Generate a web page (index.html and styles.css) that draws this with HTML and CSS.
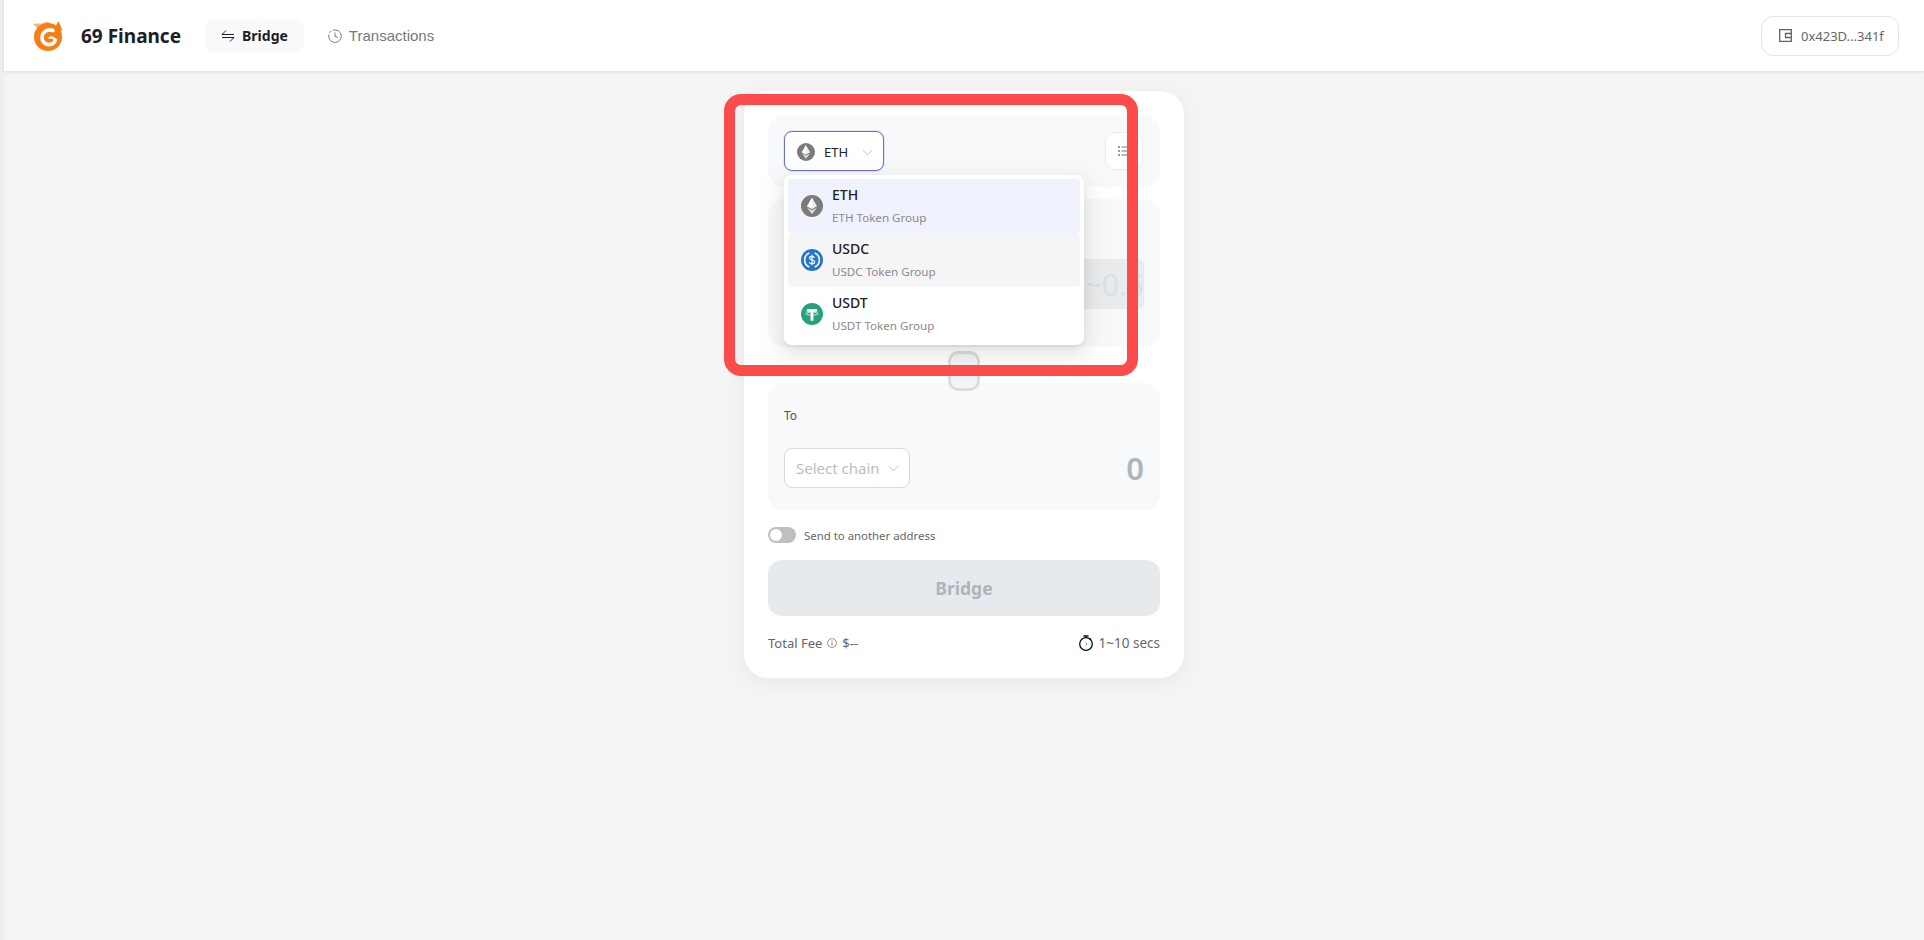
FILE: index.html
```html
<!DOCTYPE html>
<html lang="en">
<head>
<meta charset="utf-8">
<title>69 Finance</title>
<link rel="stylesheet" href="styles.css">
</head>
<body>
<header class="topbar">
  <div class="brand">
    <svg class="logo" viewBox="0 0 32 32" aria-hidden="true">
      <path d="M1 4.500c3-1.800 5.500-.6 8-.8 2.500-.2 5-2.500 9-1.700-2 .8-3 2-3 3.500L7 11C6 8 4 6 1 4.500z" fill="#f9b27a"/>
      <path d="M22 9 26.500 1c.6 3 3.500 6 3.500 10z" fill="#f47f16"/>
      <circle cx="16" cy="17" r="14" fill="#f47f16"/>
      <path d="M21 10.500c-5.500-2-11 1.500-11 7 0 5 4.500 8 9 6.800 2.200-.6 3.800-2.300 4.300-4.300" fill="none" stroke="#fff" stroke-width="3.600" stroke-linecap="round"/>
      <path d="M23.300 20c-1.500-2.500-4-3-6-2" fill="none" stroke="#fff" stroke-width="2" stroke-linecap="round"/>
    </svg>
    <span class="brand-name">69 Finance</span>
  </div>
  <nav class="nav">
    <a class="nav-item nav-active">
      <svg class="nav-icon" viewBox="0 0 14 14" aria-hidden="true"><path d="M1 5.500h12M1 5.500 5 1.500M13 8.500H1M13 8.500l-4 4" fill="none" stroke="currentColor" stroke-width="1"/></svg>
      Bridge
    </a>
    <a class="nav-item">
      <svg class="nav-icon" viewBox="0 0 14 14" aria-hidden="true"><path d="M5 1.200A6.300 6.300 0 1 1 .9 5.500M7 3.500V7.300l2.800 1.400" fill="none" stroke="currentColor" stroke-width="1"/><path d="M1.500 3.800 3.300 2" stroke="currentColor" stroke-width="1"/></svg>
      Transactions
    </a>
  </nav>
  <button class="wallet">
    <svg class="wallet-icon" viewBox="0 0 13 13" aria-hidden="true"><path d="M.7.700h11.600v11.600H.7zM12 4.500H6.500v4H12" fill="none" stroke="#5f6368" stroke-width="1.300"/></svg>
    0x423D...341f
  </button>
</header>

<main class="page">
  <section class="card">
    <div class="panel panel-token">
      <div class="select-wrap">
        <div class="select select-open">
          <svg class="token-sm" viewBox="0 0 22 22" aria-hidden="true"><use href="#eth"/></svg>
          <span class="select-label">ETH</span>
          <svg class="chev chev-token" viewBox="0 0 12 7" aria-hidden="true"><path d="M1 1l5 5 5-5" fill="none" stroke="currentColor"/></svg>
        </div>
        <div class="menu">
          <div class="menu-item menu-selected">
            <svg class="token" viewBox="0 0 22 22" aria-hidden="true">
              <g id="eth">
                <circle cx="11" cy="11" r="11" fill="#7c7b7a"/>
                <path d="M11 2.800 6 11.200 11 14l5-2.800z" fill="#eeeeee"/>
                <path d="M11 2.800v11.200L6 11.200z" fill="#fff"/>
                <path d="M6 12.400 11 19.200l5-6.800-5 2.800z" fill="#dddddd"/>
              </g>
            </svg>
            <div class="menu-text"><span class="menu-title">ETH</span><span class="menu-sub">ETH Token Group</span></div>
          </div>
          <div class="menu-item menu-hover">
            <svg class="token" viewBox="0 0 22 22" aria-hidden="true">
              <circle cx="11" cy="11" r="11" fill="#2775ca"/>
              <path d="M8.300 4a7.600 7.600 0 0 0 0 14M13.700 4a7.600 7.600 0 0 1 0 14" fill="none" stroke="#fff" stroke-width="1.500"/>
              <path d="M13.500 8.700c-.4-1-1.300-1.400-2.500-1.400-1.400 0-2.400.7-2.400 1.800 0 2.500 5 1.200 5 3.800 0 1.100-1 1.800-2.600 1.800-1.300 0-2.300-.6-2.600-1.600M11 5.800v10.400" fill="none" stroke="#fff" stroke-width="1.200"/>
            </svg>
            <div class="menu-text"><span class="menu-title">USDC</span><span class="menu-sub">USDC Token Group</span></div>
          </div>
          <div class="menu-item">
            <svg class="token" viewBox="0 0 22 22" aria-hidden="true">
              <circle cx="11" cy="11" r="11" fill="#26a17b"/>
              <path d="M5.800 6.300h10.400v2.400h-3.800v9h-2.800v-9H5.800z" fill="#fff"/>
              <ellipse cx="11" cy="10.600" rx="6.200" ry="1.500" fill="none" stroke="#fff" stroke-width=".8"/>
            </svg>
            <div class="menu-text"><span class="menu-title">USDT</span><span class="menu-sub">USDT Token Group</span></div>
          </div>
        </div>
      </div>
      <button class="list-btn" aria-label="List">
        <svg viewBox="0 0 12 12" class="list-icon" aria-hidden="true"><path d="M3.500 2H12M3.500 6H12M3.500 10H12" stroke="#777" stroke-width="1"/><circle cx="1" cy="2" r="1" fill="#777"/><circle cx="1" cy="6" r="1" fill="#777"/><circle cx="1" cy="10" r="1" fill="#777"/></svg>
      </button>
    </div>

    <div class="panel panel-from">
      <div class="amount-input">~0.5</div>
    </div>

    <div class="swap" aria-hidden="true"></div>

    <div class="panel panel-to">
      <span class="panel-label">To</span>
      <div class="panel-row">
        <div class="select select-chain">
          <span>Select chain</span>
          <svg class="chev" viewBox="0 0 12 7" aria-hidden="true"><path d="M1 1l5 5 5-5" fill="none" stroke="currentColor"/></svg>
        </div>
        <div class="amount-zero">0</div>
      </div>
    </div>

    <div class="send-row">
      <span class="toggle"><span class="knob"></span></span>
      <span>Send to another address</span>
    </div>

    <button class="bridge-btn">Bridge</button>

    <div class="fee-row">
      <div class="fee-left">
        <span>Total Fee</span>
        <svg class="info" viewBox="0 0 10 10" aria-hidden="true"><circle cx="5" cy="5" r="4.400" fill="none" stroke="#777" stroke-width=".8"/><path d="M5 4.200v3.200M5 2.400v1" stroke="#777" stroke-width=".9"/></svg>
        <span>$--</span>
      </div>
      <div class="fee-right">
        <svg class="watch" viewBox="0 0 16 16" aria-hidden="true"><circle cx="8" cy="9" r="6.300" fill="#fff" stroke="#111" stroke-width="1.300"/><path d="M5.500 1h5M8 1v2M13 3.500l-1.400 1.400" stroke="#111" stroke-width="1.300" fill="none"/><path d="M7.500 7.500 9 9l-1.500 1.500" stroke="#d33" stroke-width=".7" fill="none"/></svg>
        <span>1~10 secs</span>
      </div>
    </div>

    <div class="annotation" aria-hidden="true"></div>
  </section>
</main>
</body>
</html>
```
FILE: styles.css
```css
* { box-sizing: border-box; }

html, body { height: 100%; }

body {
  margin: 0;
  padding-left: 4px;
  min-height: 940px;
  overflow: hidden;
  background: #f4f4f4;
  font-family: "Noto Sans", "Open Sans", Arial, sans-serif;
  color: #222;
  box-shadow: inset 4px 0 0 #eeeeef;
}

button { font-family: inherit; }

.topbar {
  display: flex;
  align-items: center;
  height: 71px;
  padding: 0 25px 0 28px;
  background: #fff;
  box-shadow: 0 1px 3px rgba(0, 0, 0, .1);
}

.brand {
  display: flex;
  align-items: center;
  gap: 17px;
}

.logo { width: 32px; height: 32px; }

.brand-name {
  font-size: 19px;
  font-weight: 700;
  color: #1c2026;
  line-height: 24px;
}

.nav {
  display: flex;
  align-items: center;
  gap: 8px;
  margin-left: 24px;
}

.nav-item {
  display: flex;
  align-items: center;
  gap: 7px;
  height: 33px;
  padding: 0 16px;
  border-radius: 8px;
  font-family: "Liberation Sans", Arial, sans-serif;
  font-size: 15px;
  color: #777;
}

.nav-active {
  background: #f7f9fb;
  color: #1c2026;
  font-family: "Noto Sans", sans-serif;
  font-size: 14px;
  font-weight: 700;
}

.nav-icon { width: 14px; height: 14px; }

.wallet {
  display: flex;
  align-items: center;
  gap: 9px;
  height: 40px;
  width: 138px;
  margin-left: auto;
  padding: 0 0 0 17px;
  border: 1px solid #e3e4e6;
  border-radius: 12px;
  background: #fff;
  color: #666;
  font-family: "Noto Sans", sans-serif;
  font-size: 13px;
}

.wallet-icon { width: 13px; height: 13px; flex: none; }

.page {
  display: flex;
  justify-content: center;
  padding: 20px 0 0 0;
}

.card {
  position: relative;
  width: 440px;
  height: 587px;
  padding: 24px;
  border-radius: 24px;
  background: #fff;
  box-shadow: 0 4px 20px rgba(0, 0, 0, .05);
}

.panel {
  border-radius: 16px;
  background: #f7f9fb;
}

.panel-token {
  display: flex;
  align-items: center;
  justify-content: space-between;
  height: 72px;
  padding: 0 17px 0 16px;
}

.panel-from {
  display: flex;
  justify-content: flex-end;
  height: 148px;
  margin-top: 12px;
  padding: 60px 16px 0;
}

.panel-to {
  height: 127px;
  margin-top: 36px;
  padding: 25px 16px 0;
}

.panel-label {
  display: block;
  font-size: 12px;
  line-height: 16px;
  color: #555;
}

.panel-row {
  display: flex;
  align-items: center;
  justify-content: space-between;
  margin-top: 24px;
}

.select-wrap { position: relative; }

.select {
  display: flex;
  align-items: center;
  background: #fff;
  border: 1px solid #d9d9d9;
  border-radius: 8px;
}

.select-open {
  width: 100px;
  height: 40px;
  padding: 2px 0 0 12px;
  border-color: #6a70c4;
  box-shadow: 0 0 0 1px rgba(106, 112, 196, .15);
  font-size: 13px;
  color: #222;
}

.token-sm { width: 18px; height: 18px; flex: none; }

.select-label { margin-left: 9px; }

.chev { width: 11px; height: 7px; color: #bbb; flex: none; }

.chev-token { margin-left: 14px; }

.select-chain {
  justify-content: space-between;
  width: 126px;
  height: 40px;
  padding: 0 10px 0 11px;
  font-size: 15px;
  color: #bdbdbd;
}

.menu {
  position: absolute;
  z-index: 2;
  top: 44px;
  left: 0;
  width: 300px;
  padding: 4px;
  border-radius: 8px;
  background: #fff;
  box-shadow: 0 6px 16px rgba(0, 0, 0, .08), 0 3px 6px -4px rgba(0, 0, 0, .12), 0 9px 28px 8px rgba(0, 0, 0, .05);
}

.menu-item {
  display: flex;
  align-items: center;
  gap: 9px;
  height: 54px;
  padding: 0 13px;
  border-radius: 4px;
}

.menu-selected { background: #eff1fd; }

.menu-hover { background: #f5f5f5; }

.token { width: 22px; height: 22px; flex: none; }

.menu-text {
  display: flex;
  flex-direction: column;
  gap: 7px;
  padding-bottom: 1px;
}

.menu-title {
  font-size: 14px;
  line-height: 17px;
  font-weight: 500;
  color: #222;
}

.menu-sub {
  font-size: 11.600px;
  line-height: 15px;
  color: #8a8a8e;
}

.list-btn {
  display: flex;
  align-items: center;
  justify-content: center;
  width: 38px;
  height: 38px;
  padding: 0;
  border: 1px solid #ececee;
  border-radius: 10px;
  background: #fff;
}

.list-icon { width: 12px; height: 12px; }

.amount-input {
  display: flex;
  align-items: center;
  justify-content: flex-end;
  width: 230px;
  height: 50px;
  border-radius: 6px;
  background: #e9ebed;
  color: #dde1e6;
  font-size: 30px;
}

.amount-zero {
  font-size: 31px;
  line-height: 40px;
  font-weight: 600;
  color: #adb5bd;
}

.swap {
  position: absolute;
  left: 204px;
  top: 260px;
  width: 32px;
  height: 40px;
  border: 3px solid #dcdcdc;
  border-radius: 10px;
  background: #f3f4f5;
}

.send-row {
  display: flex;
  align-items: center;
  gap: 8px;
  height: 16px;
  margin-top: 17px;
  font-size: 11.400px;
  color: #666;
}

.toggle {
  display: block;
  width: 28px;
  height: 16px;
  padding: 2px;
  border-radius: 8px;
  background: #bfbfbf;
}

.knob {
  display: block;
  width: 12px;
  height: 12px;
  border-radius: 50%;
  background: #fff;
}

.bridge-btn {
  display: block;
  width: 100%;
  height: 56px;
  margin-top: 17px;
  border: 0;
  border-radius: 14px;
  background: #e7eaed;
  color: #adb5bd;
  font-size: 17.500px;
  font-weight: 700;
}

.fee-row {
  display: flex;
  align-items: center;
  justify-content: space-between;
  margin-top: 17px;
  height: 20px;
  font-size: 13px;
  color: #666;
}

.fee-right { font-size: 13.500px; }

.fee-left, .fee-right {
  display: flex;
  align-items: center;
  gap: 5px;
}

.info { width: 10px; height: 10px; }

.watch { width: 16px; height: 16px; }

.annotation {
  position: absolute;
  z-index: 3;
  left: -20px;
  top: 3px;
  width: 414px;
  height: 282px;
  border: 11px solid #fb4c4b;
  border-radius: 17px;
  pointer-events: none;
}
```
